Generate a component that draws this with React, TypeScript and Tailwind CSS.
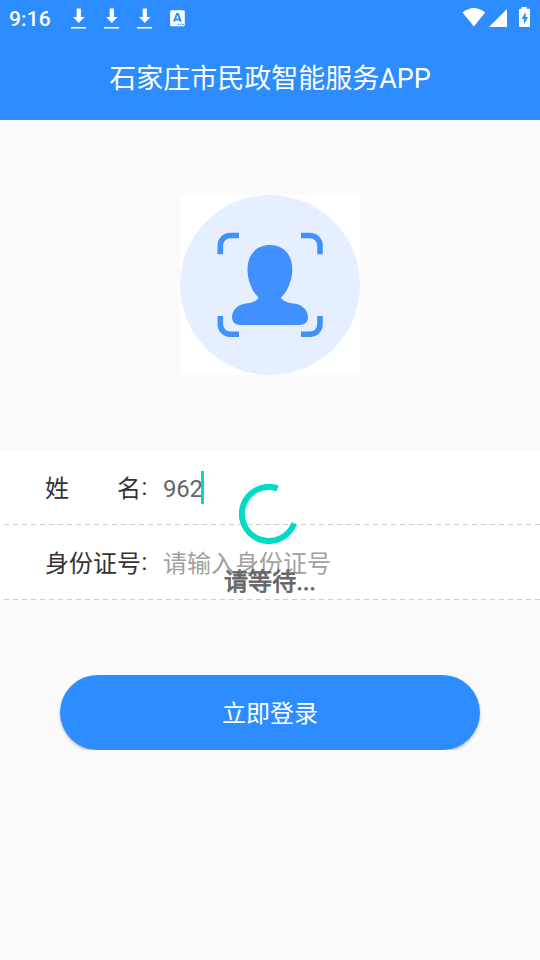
import React from "react";

const font = "font-[Roboto,'Noto_Sans_CJK_SC',sans-serif]";

function DownloadIcon() {
  return (
    <svg width="16" height="22" viewBox="0 0 16 22" fill="#fff">
      <path d="M5.7 0.600h4.200v8.400h3.600L7.800 15 2.100 9h3.600z" />
      <rect x="0" y="19" width="15" height="1.6" />
    </svg>
  );
}

function StatusBar() {
  return (
    <div className="flex h-9 items-start justify-between text-white">
      <div className="flex items-start pl-[9px]">
        <span className="w-[62px] pt-[7px] text-[21px] leading-6 font-medium tracking-[0.1px]">9:16</span>
        <div className="flex gap-[17px] pt-2">
          <DownloadIcon />
          <DownloadIcon />
          <DownloadIcon />
        </div>
        <svg className="mt-[10px] ml-[17px]" width="16" height="17" viewBox="0 0 16 17">
          <rect x="0.1" y="0.3" width="14.7" height="15.9" rx="1.5" fill="#fff" />
          <path d="M4.100 11.800 6.900 4h1.200l2.800 7.800M5 9.500h5" fill="none" stroke="#2d8cff" strokeWidth="1.9" />
          <path d="M7.7 13.800h1.200v1.200H7.700zM10.200 13.800h1.200v1.200h-1.200zM12.600 13.800h1.200v1.200h-1.200z" fill="#2d8cff" />
        </svg>
      </div>
      <svg width="80" height="36" viewBox="460 0 80 36" fill="#fff">
        <path d="M462.500 12.500Q473.700 3.500 485.200 12.500L473.900 26.500z" />
        <path d="M507 9v18h-18z" />
        <path d="M521.700 7h5v1.800h2.200q1.100 0 1.100 1.100v16q0 1.100-1.100 1.100h-8.800q-1.100 0-1.100-1.100v-16q0-1.100 1.100-1.100h1.600z" />
        <path d="M525.600 12v5h2.400l-4.100 7.600v-5.600h-2.400z" fill="#2d8cff" />
      </svg>
    </div>
  );
}

function FaceScan() {
  return (
    <svg className="bg-white" width="180" height="180" viewBox="0 0 180 180">
      <circle cx="90" cy="90" r="90" fill="#e5efff" />
      <g fill="none" stroke="#4190ff" strokeWidth="5.6">
        <path d="M40.300 59.300V50.500A10 10 0 0 1 50.300 40.500H59" />
        <path d="M121 40.500h9A10 10 0 0 1 140 50.500v8.800" />
        <path d="M40.300 121v8.300A10 10 0 0 0 50.300 139.300H59" />
        <path d="M121 139.300h9A10 10 0 0 0 140 129.300V121" />
      </g>
      <path
        d="M90 50C76 50 67.500 60 67.500 74.500C67.500 86 72.500 97 78.500 102.500C77.500 106 71 108 64.500 108.800C57 110 52 116 52 122.500C52 127 55.500 130 60 130H120C124.500 130 128 127 128 122.500C128 116 123 110 115.500 108.800C109 108 102 106 101 102.500C107 97 112.300 86 112.300 74.500C112.300 60 104 50 90 50Z"
        fill="#4190ff"
      />
    </svg>
  );
}

function Divider() {
  return (
    <svg className="block" width="540" height="1">
      <line x1="4" y1="0.5" x2="540" y2="0.5" stroke="#cccccc" strokeWidth="1" strokeDasharray="5 4" />
    </svg>
  );
}

function Field({ label, children }: { label: string; children: React.ReactNode }) {
  return (
    <div>
      <div className="flex h-[74px] items-center pl-[45px] text-2xl">
        <span className="w-[118px] pt-[3px] whitespace-pre text-[#333]">
          {label}
          <span className="inline-block -translate-y-[2px] translate-x-[0.5px]">:</span>
        </span>
        {children}
      </div>
      <Divider />
    </div>
  );
}

function Loading() {
  return (
    <div className="absolute top-[34px] left-0 flex w-full flex-col items-center">
      <svg className="-ml-[2px]" width="60" height="60" viewBox="0 0 60 60">
        <path d="M38.600 4.400A27 27 0 1 0 55.200 39.300" fill="none" stroke="#00dcc4" strokeWidth="6" />
      </svg>
      <span className="mt-[20px] text-2xl leading-9 tracking-[0.2px] text-[#666] [-webkit-text-stroke:0.8px_#666]">
        请等待...
      </span>
    </div>
  );
}

export default function App() {
  return (
    <main className={`${font} flex h-[960px] w-[540px] flex-col overflow-hidden bg-[#fafafa]`}>
      <header className="h-[120px] bg-[#2d8cff] text-white">
        <StatusBar />
        <h1 className="flex h-[84px] items-center justify-center pt-[2px] text-[27px]">石家庄市民政智能服务APP</h1>
      </header>
      <div className="flex h-[330px] items-center justify-center">
        <FaceScan />
      </div>
      <section className="relative h-[150px] bg-white">
        <Field label="姓　　名">
          <span className="pt-[3px] tracking-[-0.2px] text-[#666]">962</span>
          <span className="-ml-[2px] h-[33px] w-[3px] bg-[#00dcc4]" />
        </Field>
        <Field label="身份证号">
          <span className="pt-[3px] text-[#a0a0a0]">请输入身份证号</span>
        </Field>
        <Loading />
      </section>
      <div className="mt-[65px] h-[85px] overflow-hidden px-[60px] pt-[10px]">
        <button className="h-[75px] w-full rounded-full bg-[#2d8cff] pt-[2px] text-2xl text-white shadow-[0_2px_3px_rgba(0,0,0,0.22)]">
          立即登录
        </button>
      </div>
    </main>
  );
}
